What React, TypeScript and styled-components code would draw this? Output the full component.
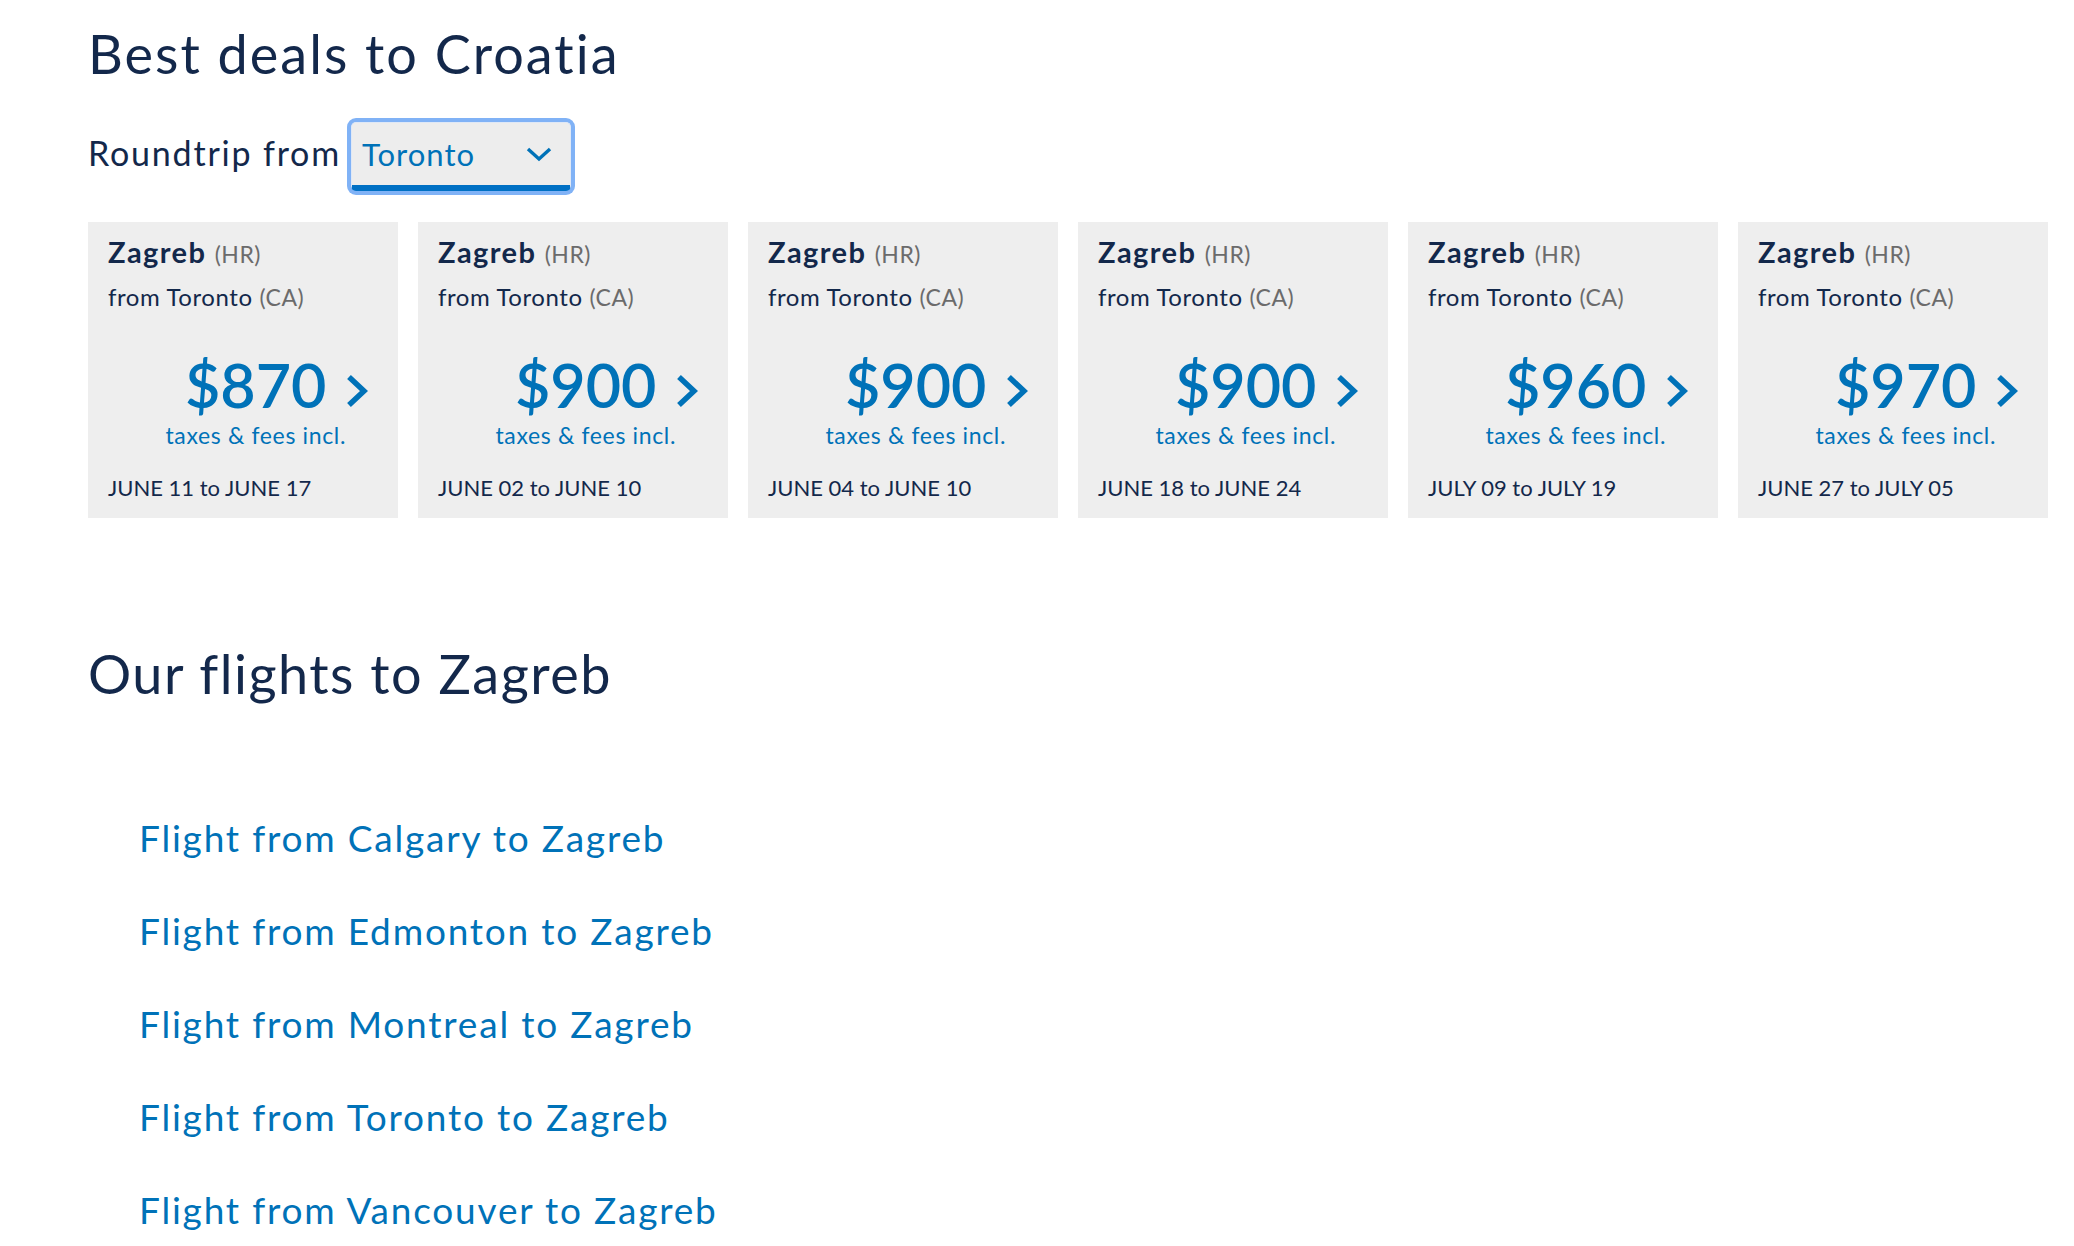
import React from 'react';
import styled, { createGlobalStyle } from 'styled-components';

const GlobalStyle = createGlobalStyle`
  html, body {
    margin: 0;
    padding: 0;
    background: #fff;
  }
  body {
    font-family: Lato, "Open Sans", Arial, sans-serif;
    color: #13284b;
  }
`;

const Page = styled.div`
  padding: 22px 0 0 88px;
`;

const Heading = styled.h2<{ $top?: number; $spacing: number }>`
  margin: ${(p) => p.$top ?? 0}px 0 0;
  font-size: 54px;
  line-height: 64px;
  font-weight: 400;
  letter-spacing: ${(p) => p.$spacing}px;
  color: #13284b;
`;

const FromRow = styled.div`
  display: flex;
  align-items: center;
  margin-top: 36px;
`;

const FromLabel = styled.span`
  font-size: 34px;
  line-height: 40px;
  letter-spacing: 1.8px;
  margin-bottom: 8px;
`;

const Select = styled.div`
  box-sizing: border-box;
  width: 220px;
  height: 69px;
  margin-left: 10px;
  display: flex;
  align-items: center;
  justify-content: space-between;
  padding: 0 18px 0 10px;
  background: #ededed;
  border: 1px solid #dfe8f6;
  border-bottom: 6px solid #0070c4;
  border-radius: 5px;
  box-shadow: 0 0 0 4px #80b2f6;
  color: #0072b8;
  font-size: 31px;
  letter-spacing: 1px;
`;

const Cards = styled.div`
  display: flex;
  gap: 20px;
  margin-top: 31px;
`;

const Card = styled.div`
  box-sizing: border-box;
  width: 310px;
  height: 296px;
  background: #eeeeee;
  padding: 13px 30px 0 20px;
  display: flex;
  flex-direction: column;
`;

const City = styled.div`
  font-size: 29px;
  line-height: 34px;
  font-weight: 700;
  letter-spacing: 1.4px;
  color: #13284b;
`;

const Code = styled.span`
  font-size: 23px;
  font-weight: 400;
  letter-spacing: 0.5px;
  color: #6b6b6b;
`;

const Origin = styled.div`
  margin-top: 11px;
  font-size: 24px;
  line-height: 30px;
  letter-spacing: 0.6px;
`;

const PriceRow = styled.div`
  display: flex;
  justify-content: flex-end;
  align-items: flex-start;
  margin-top: 42px;
`;

const PriceCol = styled.div`
  display: flex;
  flex-direction: column;
  align-items: center;
`;

const Price = styled.div`
  font-size: 61px;
  line-height: 62px;
  font-weight: 600;
  color: #0072b8;
`;

const Taxes = styled.div`
  margin-top: 6px;
  font-size: 23px;
  line-height: 26px;
  letter-spacing: 0.65px;
  color: #0072b8;
`;

const Chevron = styled.svg`
  margin-top: 20px;
  flex: none;
`;

const Dates = styled.div`
  margin-top: 27px;
  font-size: 22px;
  line-height: 26px;
`;

const Links = styled.ul`
  list-style: none;
  margin: 110px 0 0;
  padding: 0 0 0 51px;
  display: flex;
  flex-direction: column;
  gap: 49px;
`;

const LinkItem = styled.li`
  font-size: 37px;
  line-height: 44px;
  letter-spacing: 1.8px;
`;

const Link = styled.a`
  color: #0072b8;
  text-decoration: none;
`;

interface Deal {
  price: number;
  dates: string;
}

const deals: Deal[] = [
  { price: 870, dates: 'JUNE 11 to JUNE 17' },
  { price: 900, dates: 'JUNE 02 to JUNE 10' },
  { price: 900, dates: 'JUNE 04 to JUNE 10' },
  { price: 900, dates: 'JUNE 18 to JUNE 24' },
  { price: 960, dates: 'JULY 09 to JULY 19' },
  { price: 970, dates: 'JUNE 27 to JULY 05' },
];

const cities = ['Calgary', 'Edmonton', 'Montreal', 'Toronto', 'Vancouver'];

const DealCard: React.FC<{ deal: Deal }> = ({ deal }) => (
  <Card>
    <City>
      Zagreb <Code>(HR)</Code>
    </City>
    <Origin>
      from Toronto <Code>(CA)</Code>
    </Origin>
    <PriceRow>
      <PriceCol>
        <Price>${deal.price}</Price>
        <Taxes>taxes &amp; fees incl.</Taxes>
      </PriceCol>
      <Chevron width="22" height="34" viewBox="0 0 22 34">
        <polyline points="3,3 18,17 3,31" fill="none" stroke="#0072b8" strokeWidth="5.5" />
      </Chevron>
    </PriceRow>
    <Dates>{deal.dates}</Dates>
  </Card>
);

export default function App() {
  return (
    <Page>
      <GlobalStyle />
      <Heading $spacing={2}>Best deals to Croatia</Heading>
      <FromRow>
        <FromLabel>Roundtrip from</FromLabel>
        <Select>
          <span>Toronto</span>
          <svg width="26" height="16" viewBox="0 0 26 16">
            <polyline points="2,3 13,13 24,3" fill="none" stroke="#0072b8" strokeWidth="3.4" />
          </svg>
        </Select>
      </FromRow>
      <Cards>
        {deals.map((d, i) => (
          <DealCard key={i} deal={d} />
        ))}
      </Cards>
      <Heading $top={124} $spacing={1.5}>Our flights to Zagreb</Heading>
      <Links>
        {cities.map((c) => (
          <LinkItem key={c}>
            <Link href="#">Flight from {c} to Zagreb</Link>
          </LinkItem>
        ))}
      </Links>
    </Page>
  );
}
